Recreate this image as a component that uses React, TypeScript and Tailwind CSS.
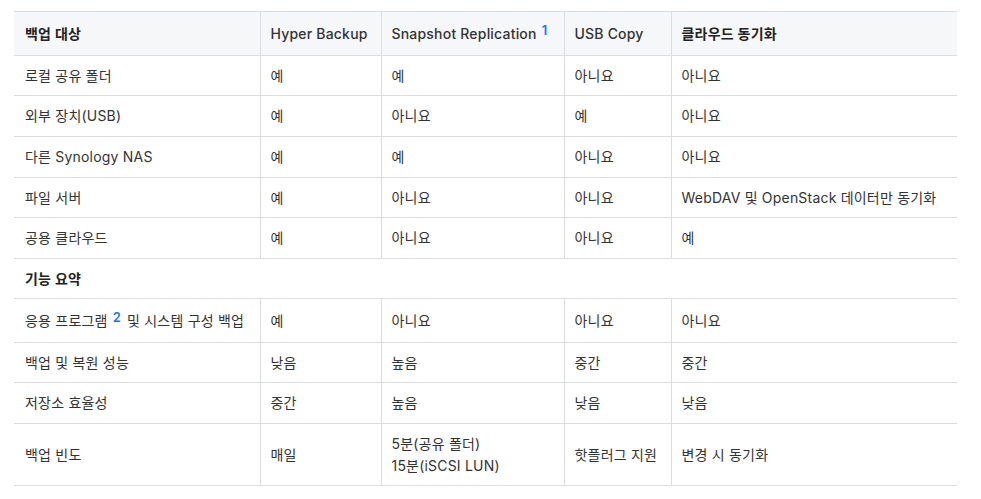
import React from "react";

const B = "border-t border-[#dcdde1]";
const td = "px-[11px] align-middle";
const tdl = "px-[10px] align-middle border-l border-[#dcdde1]";

type Row = { cells: React.ReactNode[]; h: string };

const rows1: Row[] = [
  { cells: ["로컬 공유 폴더", "예", "예", "아니요", "아니요"], h: "h-[40px]" },
  { cells: ["외부 장치(USB)", "예", "아니요", "예", "아니요"], h: "h-[41px]" },
  { cells: ["다른 Synology NAS", "예", "예", "아니요", "아니요"], h: "h-[41px]" },
  { cells: ["파일 서버", "예", "아니요", "아니요", "WebDAV 및 OpenStack 데이터만 동기화"], h: "h-[40px]" },
  { cells: ["공용 클라우드", "예", "아니요", "아니요", "예"], h: "h-[41px]" },
];

const sup = (n: string) => (
  <sup className="text-[#1f74e8] text-[13px] font-semibold leading-none relative top-[-4px] ml-[5px] mr-[2px]">{n}</sup>
);

const rows2: Row[] = [
  {
    cells: [
      <span>응용 프로그램{sup("2")} 및 시스템 구성 백업</span>,
      "예",
      "아니요",
      "아니요",
      "아니요",
    ],
    h: "h-[44px]",
  },
  { cells: ["백업 및 복원 성능", "낮음", "높음", "중간", "중간"], h: "h-[40px]" },
  { cells: ["저장소 효율성", "중간", "높음", "낮음", "낮음"], h: "h-[41px]" },
  {
    cells: [
      "백업 빈도",
      "매일",
      <div className="leading-[22px]">
        <div>5분(공유 폴더)</div>
        <div>15분(iSCSI LUN)</div>
      </div>,
      "핫플러그 지원",
      "변경 시 동기화",
    ],
    h: "h-[62px]",
  },
];

function DataRow({ r }: { r: Row }) {
  return (
    <tr className={B}>
      {r.cells.map((c, i) => (
        <td key={i} className={`${i === 0 ? td : tdl} ${r.h} p-0`}>
          {c}
        </td>
      ))}
    </tr>
  );
}

export default function App() {
  return (
    <div
      className="w-[981px] h-[499px] bg-white pt-[11px] pl-[14px]"
      style={{ fontFamily: 'Inter, "Noto Sans CJK KR", sans-serif' }}
    >
      <table className="table-fixed border-collapse w-[943px] text-[14px] leading-[20px] tracking-[0.2px] text-[#333]">
        <colgroup>
          <col className="w-[246px]" />
          <col className="w-[121px]" />
          <col className="w-[183px]" />
          <col className="w-[107px]" />
          <col className="w-[286px]" />
        </colgroup>
        <thead>
          <tr className="bg-[#f6f7f9] border-t border-[#dcdde1]">
            <th className={`${td} h-[44px] text-left font-semibold text-[#222]`}>백업 대상</th>
            <th className={`${tdl} h-[44px] text-left font-medium text-[#333]`}>Hyper Backup</th>
            <th className={`${tdl} h-[44px] text-left font-medium text-[#333]`}>
              Snapshot Replication{sup("1")}
            </th>
            <th className={`${tdl} h-[44px] text-left font-medium text-[#333]`}>USB Copy</th>
            <th className={`${tdl} h-[44px] text-left font-semibold text-[#222]`}>클라우드 동기화</th>
          </tr>
        </thead>
        <tbody>
          {rows1.map((r, i) => (
            <DataRow key={i} r={r} />
          ))}
          <tr className={B}>
            <td colSpan={5} className={`${td} h-[40px] font-semibold text-[#222]`}>
              기능 요약
            </td>
          </tr>
          {rows2.map((r, i) => (
            <DataRow key={i} r={r} />
          ))}
          <tr className={B}>
            <td colSpan={5} className="p-0 h-0"></td>
          </tr>
        </tbody>
      </table>
    </div>
  );
}
